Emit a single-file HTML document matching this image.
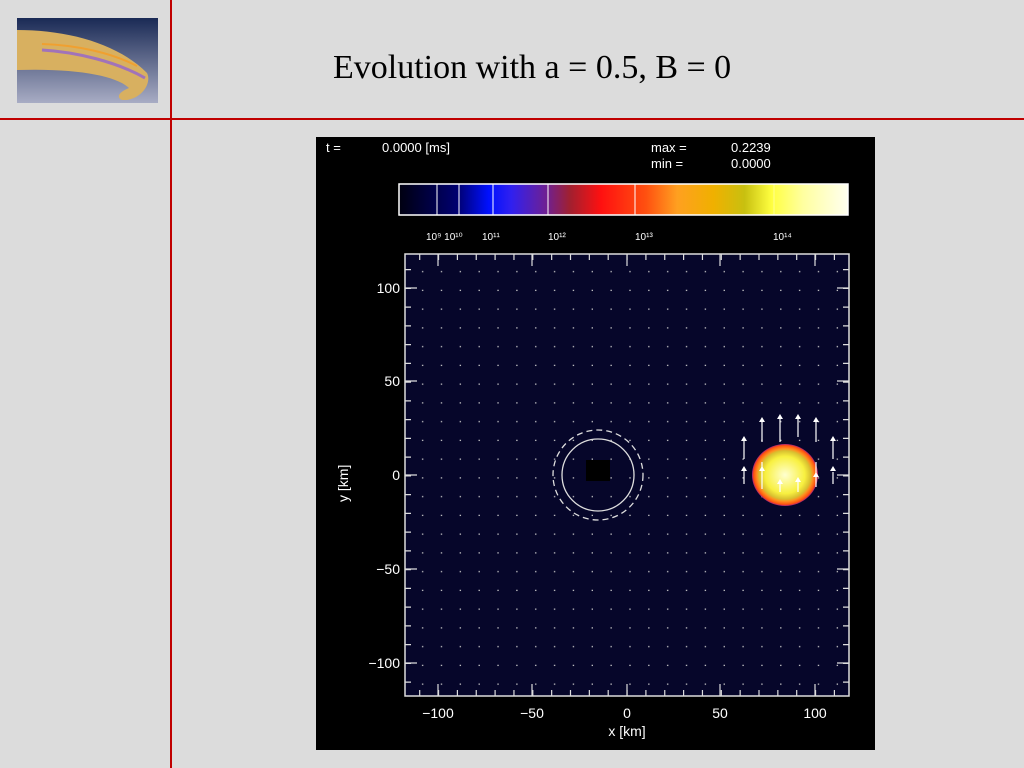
<!DOCTYPE html>
<html><head><style>
body{margin:0;width:1024px;height:768px;background:#dcdcdc;overflow:hidden;position:relative;font-family:"Liberation Sans",sans-serif}
.t{position:absolute;left:333px;top:49px;font-family:"Liberation Serif",serif;font-size:34px;color:#000}
</style></head><body>
<div style="position:absolute;left:170px;top:0;width:2px;height:768px;background:#c00000"></div>
<div style="position:absolute;left:0;top:118px;width:1024px;height:2px;background:#c00000"></div>
<svg style="position:absolute;left:17px;top:18px" width="141" height="85">
<defs><linearGradient id="bg" x1="0" y1="0" x2="0" y2="1"><stop offset="0" stop-color="#1a2a55"/><stop offset="1" stop-color="#a8acc4"/></linearGradient></defs>
<rect width="141" height="85" fill="url(#bg)"/>
<path d="M0 12 C50 12 100 25 130 55 C135 65 125 80 110 82 L105 82 C100 80 100 75 112 70 C100 58 60 50 0 52Z" fill="#d8b060"/>
<path d="M25 32 C60 34 100 44 128 60" stroke="#8a5ae0" stroke-width="3" fill="none" opacity=".7"/>
<path d="M25 26 C60 27 95 35 120 48" stroke="#f0a030" stroke-width="2" fill="none"/>
</svg>
<div class="t">Evolution with a = 0.5, B = 0</div>
<svg style="position:absolute;left:316px;top:137px" width="559" height="613" font-family="Liberation Sans,sans-serif" font-size="13" fill="#fff">
<defs>
<linearGradient id="cb" x1="0" x2="1">
<stop offset="0" stop-color="#000010"/><stop offset=".13" stop-color="#000070"/><stop offset=".2" stop-color="#0010ff"/><stop offset=".25" stop-color="#3020f0"/><stop offset=".33" stop-color="#702090"/><stop offset=".38" stop-color="#a02030"/><stop offset=".45" stop-color="#ff1010"/><stop offset=".55" stop-color="#ff5010"/><stop offset=".62" stop-color="#ffa020"/><stop offset=".7" stop-color="#f0b000"/><stop offset=".77" stop-color="#c8c010"/><stop offset=".83" stop-color="#ffff40"/><stop offset=".9" stop-color="#ffffa0"/><stop offset="1" stop-color="#fffff0"/></linearGradient>
<pattern id="dots" x="89" y="117" width="18.85" height="18.75" patternUnits="userSpaceOnUse"><rect x="17" y="17" width="1.3" height="1.3" fill="#ccc"/></pattern>
<radialGradient id="star"><stop offset="0" stop-color="#ffffd0"/><stop offset=".6" stop-color="#f8f040"/><stop offset=".78" stop-color="#d8c030"/><stop offset=".85" stop-color="#ff9020"/><stop offset=".95" stop-color="#ff5010"/><stop offset="1" stop-color="#a02080"/></radialGradient>
</defs>
<rect width="559" height="613" fill="#000"/>
<text x="10" y="15">t =</text><text x="66" y="15">0.0000 [ms]</text>
<text x="335" y="15">max =</text><text x="335" y="31">min =</text>
<text x="415" y="15">0.2239</text><text x="415" y="31">0.0000</text>
<rect x="83" y="47" width="449" height="31" fill="url(#cb)" stroke="#fff" stroke-width="1.5"/>
<g stroke="#fff" stroke-width="1"><line x1="121" y1="47" x2="121" y2="78"/><line x1="143" y1="47" x2="143" y2="78"/><line x1="177" y1="47" x2="177" y2="78"/><line x1="232" y1="47" x2="232" y2="78"/><line x1="319" y1="47" x2="319" y2="78"/><line x1="458" y1="47" x2="458" y2="78" opacity=".4"/></g>
<g font-size="10"><text x="110" y="103">10⁹ 10¹⁰</text><text x="166" y="103">10¹¹</text><text x="232" y="103">10¹²</text><text x="319" y="103">10¹³</text><text x="457" y="103">10¹⁴</text></g>
<rect x="89" y="117" width="444" height="442" fill="#06062a"/>
<rect x="89" y="117" width="444" height="442" fill="url(#dots)"/>
<rect x="270" y="323" width="24" height="21" fill="#000"/>
<circle cx="282" cy="338" r="36" fill="none" stroke="#ddd" stroke-width="1.3"/>
<circle cx="282" cy="338" r="45" fill="none" stroke="#ddd" stroke-width="1.3" stroke-dasharray="6 4"/>
<ellipse cx="469" cy="338" rx="33" ry="31" fill="url(#star)"/>
<g stroke="#fff" stroke-width="1.2">
<path d="M428 322v-20M428 347v-15M446 305v-22M446 352v-20M464 305v-25M464 355v-10M482 300v-20M482 355v-12M500 305v-22M500 350v-12M517 322v-20M517 347v-12M446 340v-15M500 340v-15"/>
</g>
<g fill="#fff"><path d="M425 304l3-5 3 5z M443 285l3-5 3 5z M461 282l3-5 3 5z M479 282l3-5 3 5z M497 285l3-5 3 5z M514 304l3-5 3 5z M425 334l3-5 3 5z M443 334l3-5 3 5z M461 347l3-5 3 5z M479 345l3-5 3 5z M497 340l3-5 3 5z M514 334l3-5 3 5z"/></g>
<rect x="89" y="117" width="444" height="442" fill="none" stroke="#ddd" stroke-width="1.5"/>
<g stroke="#ddd" stroke-width="1.2" fill="none">
<line x1="103.1" y1="556" x2="533" y2="556" stroke-width="6" stroke-dasharray="1.2 17.65"/>
<line x1="103.1" y1="120" x2="533" y2="120" stroke-width="6" stroke-dasharray="1.2 17.65"/>
<line x1="92" y1="132" x2="92" y2="559" stroke-width="6" stroke-dasharray="1.2 17.55"/>
<line x1="530" y1="132" x2="530" y2="559" stroke-width="6" stroke-dasharray="1.2 17.55"/>
<path d="M122 559v-12M216 559v-12M311 559v-12M404 559v-12M499 559v-12M122 117v12M216 117v12M311 117v12M404 117v12M499 117v12M89 151h12M89 244h12M89 338h12M89 432h12M89 526h12M533 151h-12M533 244h-12M533 338h-12M533 432h-12M533 526h-12"/>
</g>
<g font-size="14" text-anchor="middle"><text x="122" y="581">−100</text><text x="216" y="581">−50</text><text x="311" y="581">0</text><text x="404" y="581">50</text><text x="499" y="581">100</text><text x="311" y="599">x [km]</text></g>
<g font-size="14" text-anchor="end"><text x="84" y="156">100</text><text x="84" y="249">50</text><text x="84" y="343">0</text><text x="84" y="437">−50</text><text x="84" y="531">−100</text></g>
<text x="0" y="0" font-size="14" transform="translate(32,365) rotate(-90)">y [km]</text>
</svg>
</body></html>
